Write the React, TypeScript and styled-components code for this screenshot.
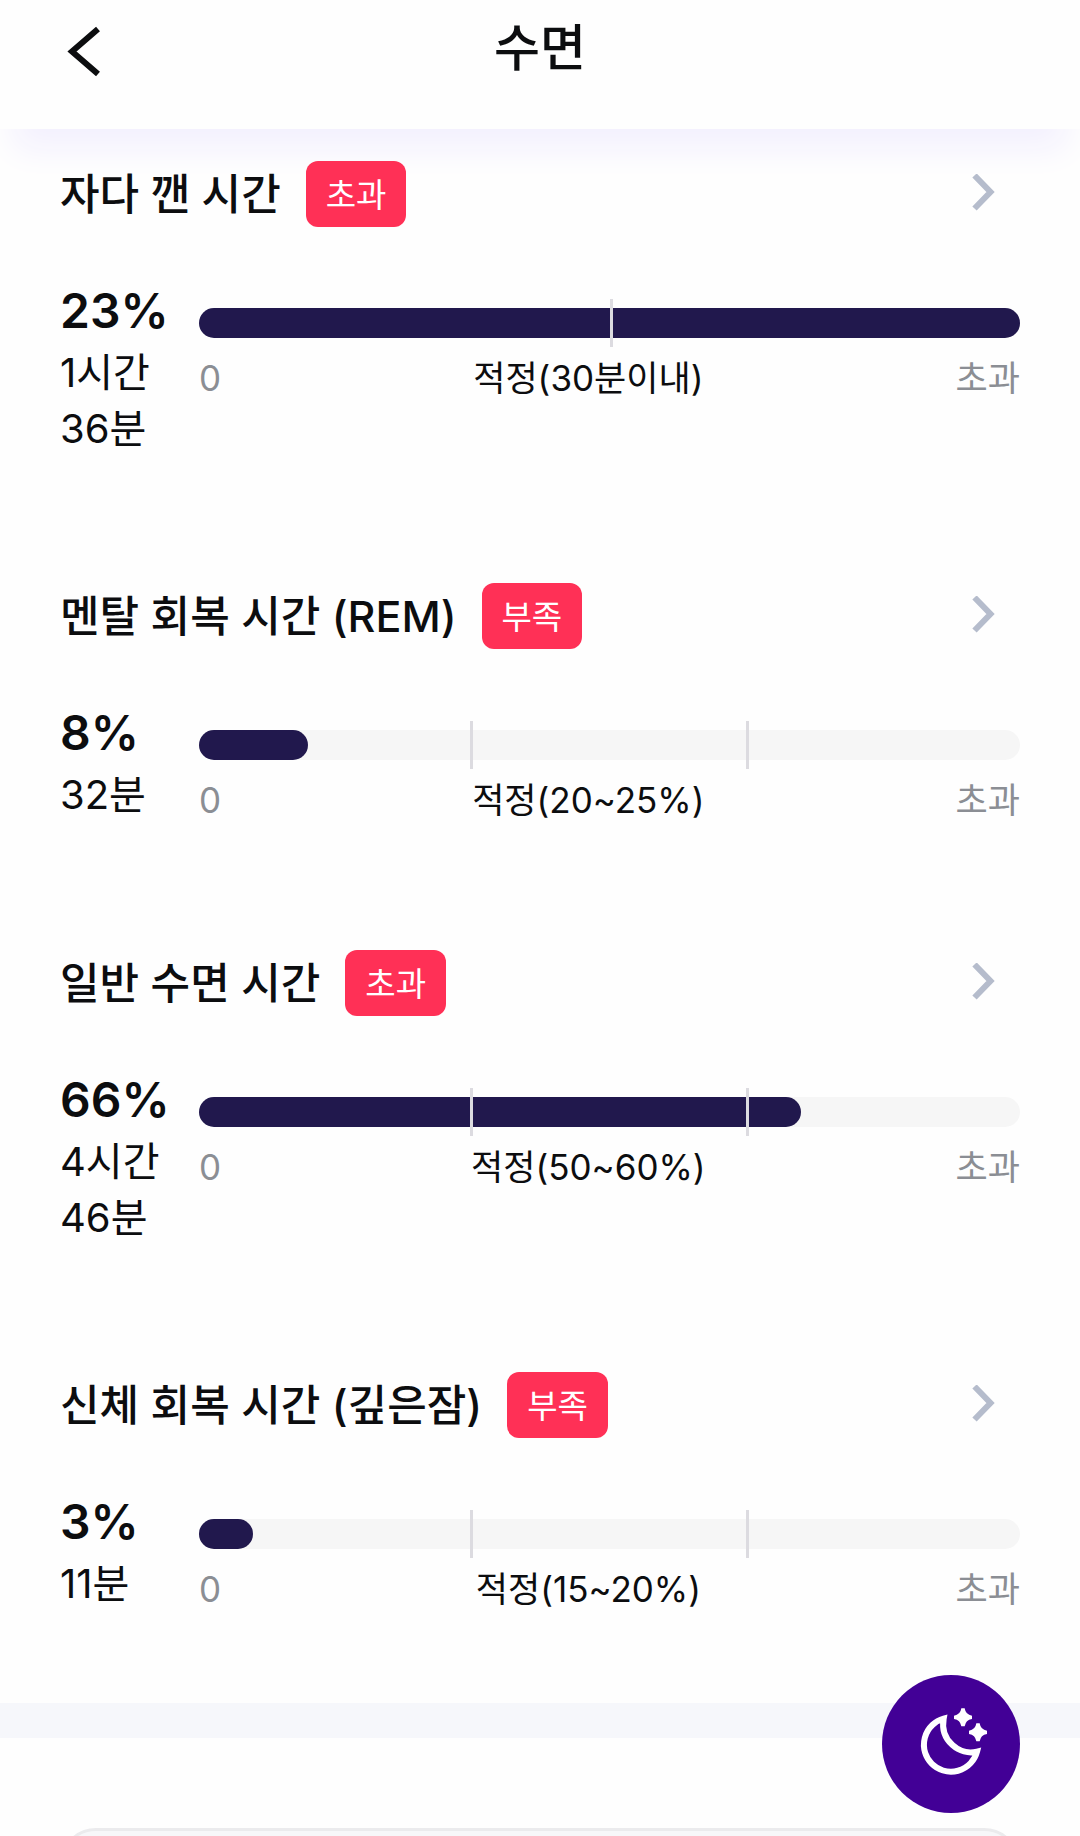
import React from "react";
import styled, { createGlobalStyle } from "styled-components";

const GlobalStyle = createGlobalStyle`
  *, *::before, *::after { box-sizing: border-box; }
  body {
    margin: 0;
    background: #fefefe;
    color: #0c0d0f;
    font-family: Inter, "Noto Sans CJK KR", sans-serif;
  }
  button { border: 0; background: none; padding: 0; font: inherit; color: inherit; cursor: pointer; }
  h1, h2, p { margin: 0; }
  svg { display: block; }
`;

const Screen = styled.div`
  position: relative;
  display: flex;
  flex-direction: column;
  height: 100vh;
  overflow: hidden;
`;

const TopBar = styled.header`
  flex: none;
  display: grid;
  grid-template-columns: 1fr auto 1fr;
  align-items: start;
  height: 129px;
  padding: 12px 60px;
  background: #fefefe;
  box-shadow: 0 34px 32px -14px #f3f0fe;
`;

const BackButton = styled.button`
  justify-self: start;
  padding: 12px 4px;
`;

const ScreenTitle = styled.h1`
  font-size: 50px;
  line-height: 72px;
  font-weight: 500;
`;

const Content = styled.main`
  flex: 1;
  min-height: 0;
  overflow-y: auto;
  scrollbar-width: none;
`;

const MetricList = styled.div`
  display: flex;
  flex-direction: column;
  gap: 126px;
  padding: 32px 60px 90px;
`;

const Metric = styled.section`
  display: flex;
  flex-direction: column;
  gap: 56px;
`;

const MetricHeader = styled.div`
  display: flex;
  align-items: center;
  height: 66px;
`;

const MetricTitle = styled.h2`
  font-size: 43px;
  line-height: 64px;
  font-weight: 500;
  white-space: nowrap;
`;

const Badge = styled.span`
  margin-left: 25px;
  padding: 2px 20px 0;
  border-radius: 12px;
  background: #ff3056;
  color: #fff;
  font-size: 33px;
  line-height: 64px;
  white-space: nowrap;
`;

const DetailButton = styled.button`
  margin-left: auto;
  padding: 12px 24px;
`;

const MetricBody = styled.div`
  display: grid;
  grid-template-columns: 139px 1fr;
`;

const Percent = styled.p`
  margin-bottom: 6px;
  font-size: 48px;
  line-height: 56px;
  font-weight: 600;
`;

const Duration = styled.p`
  font-size: 40px;
  line-height: 56px;
`;

const Chart = styled.div`
  padding-top: 25px;
`;

const Track = styled.div`
  position: relative;
  height: 30px;
  margin-bottom: 16px;
  border-radius: 15px;
  background: #f6f6f6;
`;

const Fill = styled.div`
  height: 100%;
  border-radius: 15px;
  background: #21184d;
`;

const Tick = styled.span`
  position: absolute;
  top: -9px;
  bottom: -9px;
  width: 3px;
  background: #dcdbe0;
`;

const Scale = styled.div`
  display: flex;
  justify-content: space-between;
  font-size: 35px;
  line-height: 48px;
`;

const Limit = styled.span`
  color: #8b8e94;
`;

const Divider = styled.div`
  height: 35px;
  background: #f6f7fb;
`;

const NextCard = styled.div`
  height: 240px;
  margin: 90px 60px 60px;
  border: 3px solid #ebebed;
  border-radius: 36px;
  background: #f7f7f9;
`;

const SleepButton = styled.button`
  position: absolute;
  right: 60px;
  bottom: 23px;
  z-index: 2;
  display: grid;
  place-items: center;
  width: 138px;
  height: 138px;
  border-radius: 50%;
  background: #420096;
`;

type MetricData = {
  title: string;
  status: string;
  percent: number;
  duration: string[];
  fill: number;
  ticks: number[];
  range: string;
};

const THIRDS = [33, 66.6];

const metrics: MetricData[] = [
  { title: "자다 깬 시간", status: "초과", percent: 23, duration: ["1시간", "36분"], fill: 100, ticks: [50], range: "적정(30분이내)" },
  { title: "멘탈 회복 시간 (REM)", status: "부족", percent: 8, duration: ["32분"], fill: 13.3, ticks: THIRDS, range: "적정(20~25%)" },
  { title: "일반 수면 시간", status: "초과", percent: 66, duration: ["4시간", "46분"], fill: 73.3, ticks: THIRDS, range: "적정(50~60%)" },
  { title: "신체 회복 시간 (깊은잠)", status: "부족", percent: 3, duration: ["11분"], fill: 6.6, ticks: THIRDS, range: "적정(15~20%)" },
];

const BackIcon = () => (
  <svg width="40" height="56" viewBox="0 0 40 56" fill="none" stroke="#0c0d0f" strokeWidth="6" aria-hidden="true">
    <path d="M34 5 8 27.500 34 50" />
  </svg>
);

const ChevronIcon = () => (
  <svg width="24" height="40" viewBox="0 0 24 40" fill="none" stroke="#b5bccc" strokeWidth="6" aria-hidden="true">
    <path d="M2.500 1.500 18.500 18 2.500 34.500" />
  </svg>
);

const MoonIcon = () => (
  <svg width="80" height="80" viewBox="213 190 240 240" aria-hidden="true">
    <path
      d="M311 234A81 81 0 1 0 411 333C360 346 299 300 311 234Z"
      fill="none"
      stroke="#fff"
      strokeWidth="18"
    />
    <path
      fill="#fff"
      d="M364 203h10q3 20 22 22v10q-19 3-22 22h-10q-3-19-22-22v-10q19-2 22-22ZM409 248h10q3 20 22 22v10q-19 3-22 22h-10q-3-19-22-22v-10q19-2 22-22Z"
    />
  </svg>
);

function MetricSection({ metric }: { metric: MetricData }) {
  return (
    <Metric>
      <MetricHeader>
        <MetricTitle>{metric.title}</MetricTitle>
        <Badge>{metric.status}</Badge>
        <DetailButton type="button" aria-label={metric.title}>
          <ChevronIcon />
        </DetailButton>
      </MetricHeader>
      <MetricBody>
        <div>
          <Percent>{metric.percent}%</Percent>
          {metric.duration.map((line) => (
            <Duration key={line}>{line}</Duration>
          ))}
        </div>
        <Chart>
          <Track>
            <Fill style={{ width: `${metric.fill}%` }} />
            {metric.ticks.map((tick) => (
              <Tick key={tick} style={{ left: `${tick}%` }} />
            ))}
          </Track>
          <Scale>
            <Limit>0</Limit>
            <span>{metric.range}</span>
            <Limit>초과</Limit>
          </Scale>
        </Chart>
      </MetricBody>
    </Metric>
  );
}

export default function App() {
  return (
    <Screen>
      <GlobalStyle />
      <TopBar>
        <BackButton type="button" aria-label="뒤로">
          <BackIcon />
        </BackButton>
        <ScreenTitle>수면</ScreenTitle>
      </TopBar>
      <Content>
        <MetricList>
          {metrics.map((metric) => (
            <MetricSection key={metric.title} metric={metric} />
          ))}
        </MetricList>
        <Divider />
        <NextCard />
      </Content>
      <SleepButton type="button" aria-label="수면">
        <MoonIcon />
      </SleepButton>
    </Screen>
  );
}
